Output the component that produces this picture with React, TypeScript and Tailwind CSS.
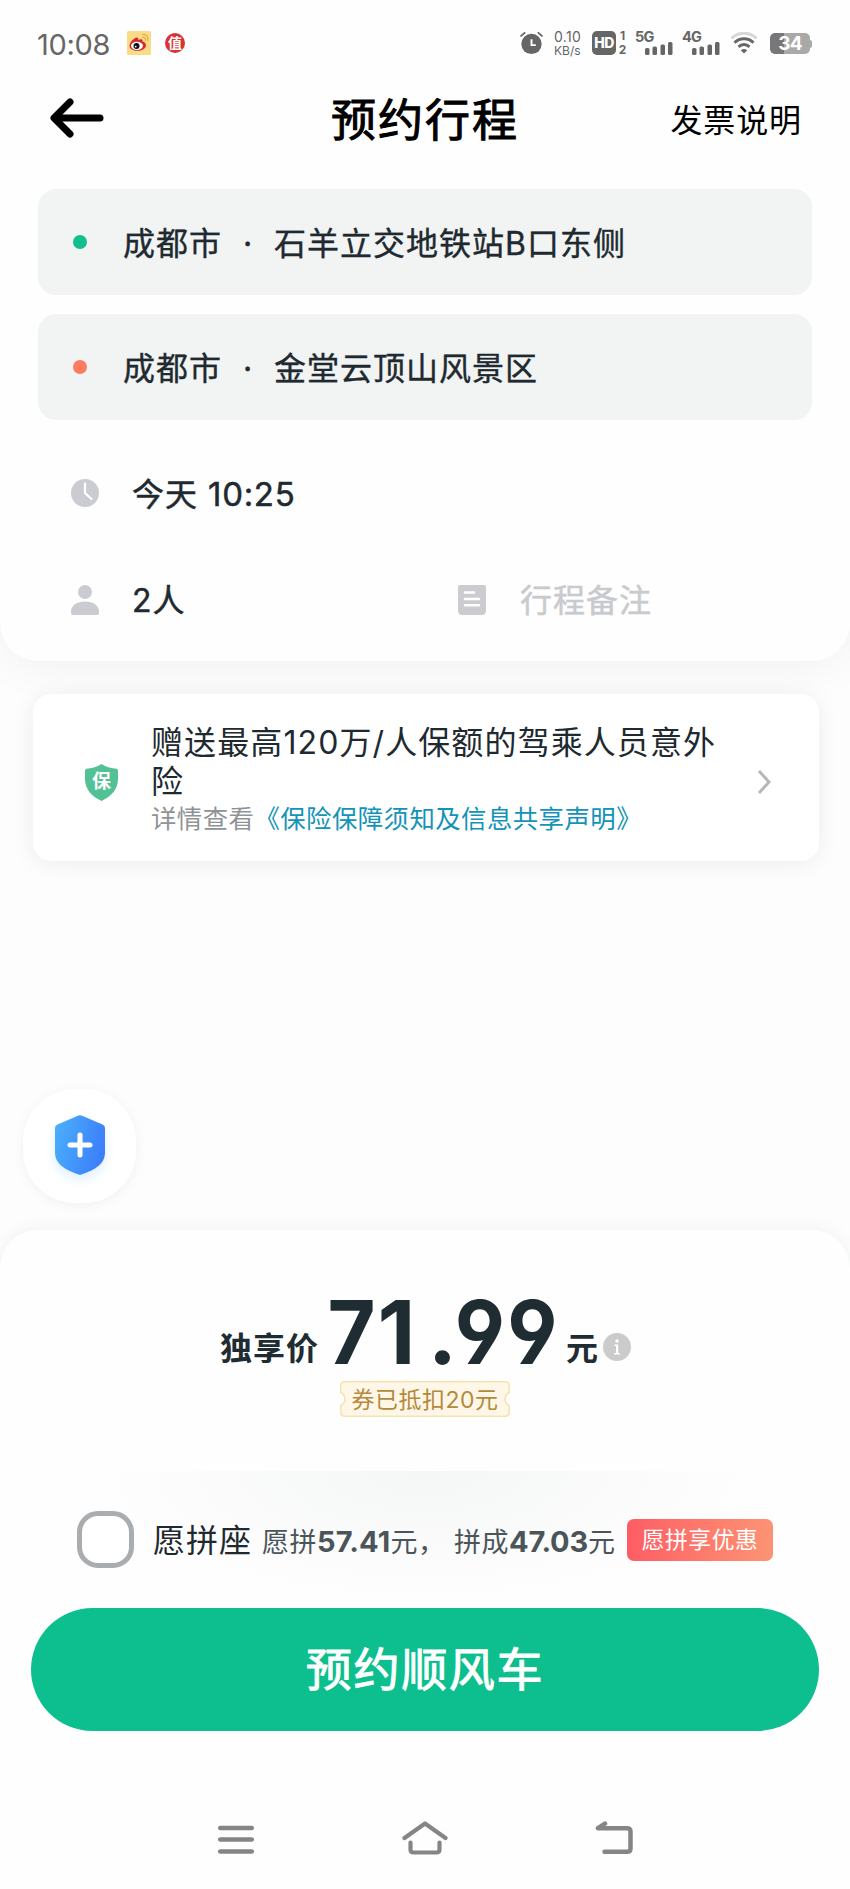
import React from 'react';

interface IconProps {
    className?: string;
}

interface PlaceCardProps {
    city: string;
    place: string;
    dotClass: string;
}

const BackArrowIcon: React.FC<IconProps> = ({ className }) => (
    <svg className={className} viewBox="0 0 54 40" fill="none" stroke="#000" strokeWidth="7" strokeLinecap="round" strokeLinejoin="round">
        <path d="M20 4 L4 20 L20 36 M5 20 H50" />
    </svg>
);

const WeiboIcon: React.FC<IconProps> = ({ className }) => (
    <svg className={className} viewBox="0 0 24 24">
        <rect width="24" height="24" rx="1.500" fill="#fbdc86" />
        <path d="M2.500 15c0-4 5-8.500 7.500-8.500 1.500 0 1.600 1.300 1.200 2.400 2.300-1 4.800-.8 4.400 1.600 2 .6 3.400 1.900 3.400 3.700 0 3-3.800 5.600-8.300 5.600S2.500 18 2.500 15z" fill="#d9272b" />
        <ellipse cx="10" cy="14.800" rx="6" ry="4.100" fill="#fff" />
        <circle cx="9.500" cy="15" r="3" fill="#111" />
        <circle cx="8.700" cy="15.600" r="0.900" fill="#fff" />
        <path d="M15.500 3.500c3.500-.5 6.200 2.400 5.200 6M15.900 6.300c1.800-.2 2.800 1 2.500 2.500" fill="none" stroke="#e6a93a" strokeWidth="1.200" strokeLinecap="round" />
    </svg>
);

const AlarmIcon: React.FC<IconProps> = ({ className }) => (
    <svg className={className} viewBox="0 0 24 24">
        <circle cx="12" cy="13" r="10.600" fill="#666" />
        <path d="M1.200 4.600 4.800 1.400M22.800 4.600 19.200 1.400" stroke="#666" strokeWidth="2" strokeLinecap="round" />
        <path d="M12 8v6.200h4.500" fill="none" stroke="#fff" strokeWidth="2" />
    </svg>
);

const SignalIcon: React.FC<IconProps> = ({ className }) => (
    <svg className={className} viewBox="0 0 28 13" fill="#666">
        <rect x="0" y="6" width="4.500" height="7" rx="1.500" />
        <rect x="7.500" y="4.500" width="4.500" height="8.500" rx="1.500" />
        <rect x="15.500" y="2.500" width="4.500" height="10.500" rx="1.500" />
        <rect x="23" y="0" width="4.500" height="13" rx="1.500" />
    </svg>
);

const WifiIcon: React.FC<IconProps> = ({ className }) => (
    <svg className={className} viewBox="0 0 28 22" fill="none" strokeWidth="3">
        <path d="M1.500 6.300C8.500-.3 19.500-.3 26.500 6.300" stroke="#d6d6d6" />
        <path d="M4.500 10.600c5.400-5.200 13.600-5.200 19 0" stroke="#666" />
        <path d="M8.500 14.800c3.200-3 7.800-3 11 0" stroke="#666" />
        <path d="M10.800 18.200c1.900-1.700 4.500-1.700 6.400 0L14 21.600z" fill="#666" stroke="none" />
    </svg>
);

const ClockIcon: React.FC<IconProps> = ({ className }) => (
    <svg className={className} viewBox="0 0 28 28">
        <circle cx="14" cy="14" r="14" fill="#cbcbd2" />
        <path d="M14 4.500V14l6.500 6" fill="none" stroke="#fff" strokeWidth="2.200" strokeLinecap="round" />
    </svg>
);

const PersonIcon: React.FC<IconProps> = ({ className }) => (
    <svg className={className} viewBox="0 0 28 30" fill="#cbcbd2">
        <circle cx="14" cy="7" r="7" />
        <path d="M0 26.500C0 20.500 6 16.500 14 16.500s14 4 14 10V28q0 2-2 2H2q-2 0-2-2z" />
    </svg>
);

const NoteIcon: React.FC<IconProps> = ({ className }) => (
    <svg className={className} viewBox="0 0 28 30">
        <path d="M2 0H26q2 0 2 2V25.500q0 4.500-4.500 4.500H4.500q-4.500 0-4.500-4.500V2Q0 0 2 0z" fill="#cbcbd2" />
        <path d="M7 7.500h9M7 14H21M7 20.200H21" stroke="#fff" strokeWidth="2.600" strokeLinecap="round" />
    </svg>
);

const PlusShieldIcon: React.FC<IconProps> = ({ className }) => (
    <svg className={className} viewBox="0 0 50 60">
        <defs>
            <linearGradient id="plusShield" x1="0" y1="0.300" x2="1" y2="0.600">
                <stop offset="0" stopColor="#4badfb" />
                <stop offset="1" stopColor="#3b7dfa" />
            </linearGradient>
        </defs>
        <path d="M23.500.6Q25 0 26.500.6L47.500 9.500Q50 10.600 50 13V38C50 48 41 54.500 26.500 59.500Q25 60 23.500 59.500C9 54.500 0 48 0 38V13Q0 10.600 2.500 9.500z" fill="url(#plusShield)" />
        <path d="M25 20V40M15 30H35" stroke="#fff" strokeWidth="5" strokeLinecap="round" />
    </svg>
);

const StatusBar: React.FC = () => (
    <div className="flex h-[72px] items-center pl-[37px] pr-[38px] pt-[14px] text-[#666]">
        <span className="w-[90px] pt-1 text-[29px] leading-[36px] tracking-[-0.3px]">10:08</span>
        <WeiboIcon className="h-6 w-6" />
        <span className="ml-[14px] flex h-5 w-5 items-center justify-center rounded-full bg-[#d93234] text-[14px] font-bold leading-none text-white">值</span>
        <div className="ml-auto flex h-6 items-start">
            <AlarmIcon className="h-6 w-[23px]" />
            <div className="ml-[11px] w-[29px] text-[12px] leading-[13px]">
                <p className="text-[14px] leading-[12px] tracking-[0.3px]">0.10</p>
                <p className="pt-px">KB/s</p>
            </div>
            <span className="ml-[9px] flex h-6 w-6 items-center justify-center rounded-[5px] bg-[#666] text-[14px] font-extrabold leading-none tracking-[-0.5px] text-white">HD</span>
            <div className="ml-0.5 mt-[-2px] w-[9px] text-center text-[12px] font-bold leading-[14px]">
                <p>1</p>
                <p>2</p>
            </div>
            {['5G', '4G'].map(label => (
                <div key={label} className="ml-[8px] w-[39px]">
                    <p className="h-[11px] text-[14.5px] font-bold leading-[12px] tracking-[-0.8px]">{label}</p>
                    <SignalIcon className="ml-[10px] h-[13px] w-[28px]" />
                </div>
            ))}
            <WifiIcon className="ml-[9px] mt-px h-[22px] w-[28px]" />
            <div className="ml-[12px] mt-0.5 flex items-center">
                <span className="flex h-[21px] w-[40px] items-center justify-center rounded-[5px] bg-linear-to-r from-[#777] from-35% to-[#a9a9a9] to-35% text-[19px] font-bold leading-none tracking-[-0.8px] text-white">34</span>
                <span className="h-2 w-0.5 rounded-r bg-[#a9a9a9]" />
            </div>
        </div>
    </div>
);

const PlaceCard: React.FC<PlaceCardProps> = ({ city, place, dotClass }) => (
    <div className="flex h-[106px] items-center rounded-[18px] bg-[#f2f4f4] pl-[35px] text-[32px] tracking-[1px] text-[#1e2a30] [-webkit-text-stroke:0.4px]">
        <span className={`mb-px h-[14px] w-[14px] rounded-full ${dotClass}`} />
        <span className="ml-[36px] w-[99px] pt-1">{city}</span>
        <span className="w-[52px] pt-1 text-center">·</span>
        <span className="pt-1">{place}</span>
    </div>
);

const InsuranceCard: React.FC = () => (
    <div className="ml-[33px] mt-[33px] flex h-[167px] w-[786px] items-center rounded-[18px] bg-white pl-[52px] shadow-[0_2px_22px_rgba(0,0,0,0.07)]">
        <div className="relative mt-2.5 h-[37px] w-[33px]">
            <svg className="h-[37px] w-[33px]" viewBox="0 0 33 37" fill="#52c193">
                <path d="M16.500 0C21 3 27 4.500 31.500 4.800Q33 5 33 7V15C33 26 25 33 16.500 37 8 33 0 26 0 15V7Q0 5 1.500 4.800C6 4.500 12 3 16.500 0z" />
            </svg>
            <span className="absolute inset-x-0 top-2 text-center text-[19px] font-bold leading-[19px] text-white">保</span>
        </div>
        <div className="ml-[33px] w-[580px] pt-1 text-[#1e2a30]">
            <p className="text-[32px] leading-[39px] tracking-[1.100px]">赠送最高120万/人保额的驾乘人员意外险</p>
            <p className="text-[25.4px] leading-[36px] tracking-[0.450px] text-[#8f9396]">
                详情查看<span className="text-[#1493b8]">《保险保障须知及信息共享声明》</span>
            </p>
        </div>
        <svg className="ml-[26px] mt-[9px] h-6 w-[14px]" viewBox="0 0 14 24" fill="none" stroke="#b5b8ba" strokeWidth="3">
            <path d="M2 1 12 12 2 23" />
        </svg>
    </div>
);

const CouponTag: React.FC = () => (
    <div className="relative mx-auto mt-[7px] h-9 w-[170px]">
        <svg className="h-9 w-[170px]" viewBox="0 0 170 36" fill="#fef7e8" stroke="#f3e3ae" strokeWidth="1.500">
            <path d="M5 .8H165Q169.200.8 169.200 5V11.500Q165 14 165 18T169.200 24.500V31Q169.200 35.200 165 35.200H5Q.8 35.200.8 31V24.500Q5 22 5 18T.8 11.500V5Q.8.8 5 .8z" />
        </svg>
        <span className="absolute inset-0 text-center text-[23px] leading-[38px] tracking-[0.500px] text-[#b5883c]">券已抵扣20元</span>
    </div>
);

const PriceRow: React.FC = () => (
    <div className="flex h-[144px] items-end pl-[220px] font-bold text-[#1f2d33]">
        <span className="mb-[3px] w-[106px] text-[32px] leading-[44px] tracking-[1px]">独享价</span>
        <span className="mb-[-2px] flex w-[240px] text-[88px] leading-[88px] [font-feature-settings:'cv04','ss01']">
            <span className="flex w-[51px] scale-x-[0.94] justify-center">7</span>
            <span className="flex w-[39px] justify-center">1</span>
            <span className="flex w-[38px] justify-center pl-[15px]">.</span>
            <span className="flex w-[52px] scale-x-[0.93] justify-center">9</span>
            <span className="flex w-[53px] scale-x-[0.93] justify-center">9</span>
        </span>
        <span className="mb-[3px] text-[32px] leading-[44px] tracking-[1px]">元</span>
        <span className="mb-[13px] ml-[4px] flex h-7 w-7 items-center justify-center rounded-full bg-[#cbcbcb]">
            <svg className="h-4 w-2" viewBox="0 0 8 16" fill="#fff">
                <circle cx="4" cy="2" r="1.700" />
                <path d="M1.500 5.500H5.200V14H7V15.500H1V14H3V7H1.500z" />
            </svg>
        </span>
    </div>
);

const ShareRow: React.FC = () => (
    <div className="flex h-[137px] items-center bg-[radial-gradient(ellipse_330px_130px_at_50%_0%,#f5f6f6,#fefefe)] pl-[77px] text-[27px] tracking-[0.500px] text-[#4b5459]">
        <span className="h-[57px] w-[57px] rounded-[21px] border-[5px] border-[#a9adaf] bg-white" />
        <span className="ml-[19px] w-[109px] pt-[3px] text-[32px] tracking-[1px] text-[#1e2a30]">愿拼座</span>
        <span className="w-[192px] whitespace-nowrap pt-1">
            愿拼<b className="text-[29px] tracking-[0.200px]">57.41</b>元，
        </span>
        <span className="w-[173px] whitespace-nowrap pt-1">
            拼成<b className="text-[29px] tracking-[-0.200px]">47.03</b>元
        </span>
        <span className="flex h-[42px] w-[146px] items-center justify-center rounded-[7px] bg-linear-to-r from-[#fd5c64] to-[#fd9374] pt-0.5 text-[22.800px] text-white">愿拼享优惠</span>
    </div>
);

const NavBar: React.FC = () => (
    <div className="flex h-[158px] items-start pt-[90px]">
        <svg className="ml-[218px] h-[34px] w-9" viewBox="0 0 36 34" stroke="#858585" strokeWidth="4.500" strokeLinecap="round">
            <path d="M2.200 7H33.800M2.200 18.500H33.800M2.200 30.500H33.800" />
        </svg>
        <svg className="ml-[148px] h-[34px] w-[46px]" viewBox="0 0 46 34" fill="none" stroke="#858585" strokeWidth="4.200" strokeLinecap="round" strokeLinejoin="round">
            <path d="M2.500 17 23 2.500 43.500 17M8.500 21.500V28.500Q8.500 31.500 11.500 31.500H34.500Q37.500 31.500 37.500 28.500V21.500" />
        </svg>
        <svg className="ml-[147px] h-[34px] w-[38px]" viewBox="0 0 38 34" fill="none" stroke="#858585" strokeWidth="4.500" strokeLinecap="round" strokeLinejoin="round">
            <path d="M10 2.500 3 7.200H32Q35.500 7.200 35.500 10.500V27.500Q35.500 30.800 32 30.800H9.500" />
        </svg>
    </div>
);

const App: React.FC = () => {
    return (
        <div className="flex h-[1889px] w-[850px] flex-col overflow-hidden bg-[#fdfdfd] font-['Inter','Noto_Sans_CJK_SC',sans-serif]">
            <div className="h-[661px] shrink-0 rounded-b-[38px] bg-[#fefefe] shadow-[0_2px_50px_rgba(0,0,0,0.06)]">
                <StatusBar />
                <header className="flex h-[96px] items-center pl-[50px] pr-[48px] text-black">
                    <BackArrowIcon className="mb-1 h-10 w-[54px]" />
                    <h1 className="ml-[227px] pt-0.5 text-[45px] tracking-[2px] [-webkit-text-stroke:1px]">预约行程</h1>
                    <span className="ml-auto pt-0.5 text-[32px] tracking-[0.900px]">发票说明</span>
                </header>
                <div className="mx-[38px] mt-[21px] flex w-[774px] flex-col gap-[19px]">
                    <PlaceCard city="成都市" place="石羊立交地铁站B口东侧" dotClass="bg-[#10bf8c]" />
                    <PlaceCard city="成都市" place="金堂云顶山风景区" dotClass="bg-[#fb7c5f]" />
                </div>
                <div className="mt-[20px] grid grid-cols-[387px_1fr] pl-[71px] text-[32px] tracking-[1px] text-[#1e2a30] [-webkit-text-stroke:0.5px]">
                    <div className="col-span-2 flex h-[106px] items-center">
                        <ClockIcon className="h-7 w-7" />
                        <span className="ml-[33px] pt-[3px]">
                            今天 <span className="text-[33px] tracking-[0.700px]">10:25</span>
                        </span>
                    </div>
                    <div className="flex h-[107px] items-center">
                        <PersonIcon className="h-[30px] w-7" />
                        <span className="ml-[33px] pt-[3px]">2人</span>
                    </div>
                    <div className="flex h-[107px] items-center text-[#c8cace]">
                        <NoteIcon className="h-[30px] w-7" />
                        <span className="ml-[34px] pt-[3px]">行程备注</span>
                    </div>
                </div>
            </div>
            <InsuranceCard />
            <div className="ml-[23px] mt-[228px] flex h-[114px] w-[113px] shrink-0 items-center justify-center rounded-[52px] bg-white pb-0.5 shadow-[0_2px_12px_rgba(0,0,0,0.05)]">
                <PlusShieldIcon className="h-[60px] w-[50px] drop-shadow-[0_5px_6px_rgba(75,173,251,0.2)]" />
            </div>
            <div className="mt-[27px] h-[659px] shrink-0 rounded-t-[38px] bg-[#fefefe] shadow-[0_-2px_16px_rgba(30,60,50,0.06)]">
                <PriceRow />
                <CouponTag />
                <div className="mt-[54px]">
                    <ShareRow />
                </div>
                <button className="ml-[31px] flex h-[123px] w-[788px] items-center justify-center rounded-full bg-[#0dbf8e] text-[46px] tracking-[1.700px] text-white [-webkit-text-stroke:1px]">
                    预约顺风车
                </button>
                <NavBar />
            </div>
        </div>
    );
};

export default App;
